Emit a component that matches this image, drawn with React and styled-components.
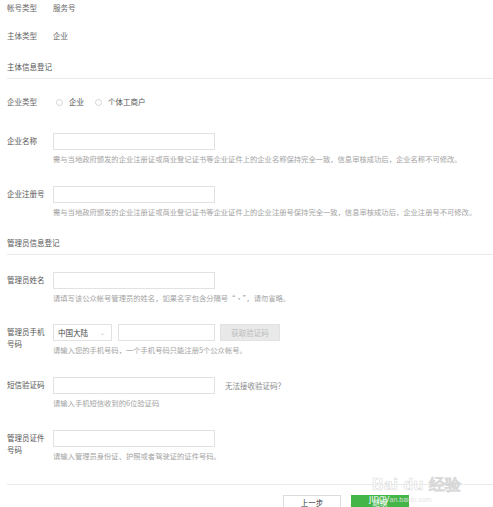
import React from "react";
import styled, { createGlobalStyle } from "styled-components";

const Global = createGlobalStyle`
  html, body { margin: 0; padding: 0; background: #fff; }
  body {
    font-family: "Noto Sans CJK SC", "Noto Sans", "Liberation Sans", sans-serif;
    font-size: 7.5px;
    color: #555;
    overflow: hidden;
  }
  * { box-sizing: border-box; }
`;

const Page = styled.div`
  position: relative;
  width: 493px;
  height: 507px;
  padding: 3px 0 0 7px;
  display: flex;
  flex-direction: column;
  overflow: hidden;
`;

const InfoRow = styled.div`
  display: flex;
  line-height: 10px;
  margin-top: ${(p) => p.$mt || 0}px;
  color: #666;
`;

const InfoLabel = styled.div`
  width: 46px;
  flex: none;
`;

const SectionTitle = styled.div`
  margin-top: ${(p) => p.$mt}px;
  line-height: 10px;
  padding-bottom: 6px;
  border-bottom: 1px solid #ebebeb;
  color: #555;
`;

const FormRow = styled.div`
  display: flex;
  align-items: flex-start;
  margin-top: ${(p) => p.$mt}px;
`;

const Label = styled.div`
  width: 46px;
  flex: none;
  padding-top: ${(p) => (p.$two ? 2 : 3)}px;
  line-height: ${(p) => (p.$two ? 12 : 10)}px;
  color: #555;
`;

const Field = styled.div`
  display: flex;
  flex-direction: column;
`;

const Controls = styled.div`
  display: flex;
  align-items: center;
  gap: ${(p) => p.$gap || 0}px;
`;

const Input = styled.div`
  width: ${(p) => p.$w || 162}px;
  height: 17px;
  border: 1px solid #e2e2e2;
  background: #fff;
`;

const Select = styled.div`
  width: 59px;
  height: 17px;
  border: 1px solid #e2e2e2;
  display: flex;
  align-items: center;
  justify-content: space-between;
  padding: 0 6px 0 4px;
  color: #444;
  line-height: 10px;
`;

const Caret = styled.span`
  color: #bbb;
  font-size: 6px;
`;

const CodeButton = styled.div`
  width: 60px;
  height: 17px;
  margin-left: -1px;
  background: #e9e9e9;
  border: 1px solid #e2e2e2;
  color: #bcbcbc;
  display: flex;
  align-items: center;
  justify-content: center;
`;

const Help = styled.div`
  margin-top: 4px;
  line-height: 10px;
  font-size: 7.3px;
  color: #a3a3a3;
  white-space: nowrap;
`;

const LinkText = styled.span`
  margin-left: 10px;
  color: #8a8a8a;
`;

const RadioGroup = styled.div`
  display: flex;
  align-items: center;
  gap: 4px;
  color: #555;
`;

const Radio = styled.span`
  width: 7px;
  height: 7px;
  border: 1px solid #d4d4d4;
  border-radius: 50%;
  margin-left: ${(p) => p.$ml || 0}px;
  margin-right: 2px;
`;

const Footer = styled.div`
  margin-top: 23px;
  border-top: 1px solid #ebebeb;
  padding-top: 10px;
  display: flex;
  padding-left: 276px;
  gap: 10px;
`;

const Button = styled.div`
  width: 58px;
  height: 16px;
  display: flex;
  align-items: center;
  justify-content: center;
  line-height: 10px;
  border: 1px solid ${(p) => (p.$primary ? "#44b549" : "#dcdcdc")};
  background: ${(p) => (p.$primary ? "#44b549" : "#fff")};
  color: ${(p) => (p.$primary ? "#fff" : "#333")};
`;

const Watermark = styled.div`
  position: absolute;
  left: 372px;
  top: 476px;
  pointer-events: none;
  display: flex;
  flex-direction: column;
  align-items: flex-start;
`;

const WmLogo = styled.div`
  font-family: "Liberation Sans", sans-serif;
  font-size: 16px;
  font-weight: bold;
  line-height: 17px;
  letter-spacing: 0.5px;
  color: rgba(255, 255, 255, 0.6);
  -webkit-text-stroke: 0.6px rgba(200, 200, 200, 0.7);
`;

const WmUrl = styled.div`
  font-family: "Liberation Sans", sans-serif;
  font-size: 7px;
  line-height: 10px;
  margin-top: 1px;
  margin-left: -3px;
  color: rgba(225, 225, 225, 0.9);
`;

const WmUrlStrong = styled.span`
  font-size: 10px;
  color: rgba(255, 255, 255, 0.9);
`;

export default function App() {
  return (
    <>
      <Global />
      <Page>
        <InfoRow>
          <InfoLabel>帐号类型</InfoLabel>
          <span>服务号</span>
        </InfoRow>
        <InfoRow $mt={18}>
          <InfoLabel>主体类型</InfoLabel>
          <span>企业</span>
        </InfoRow>

        <SectionTitle $mt={21}>主体信息登记</SectionTitle>

        <InfoRow $mt={18}>
          <InfoLabel>企业类型</InfoLabel>
          <RadioGroup>
            <Radio $ml={3} />
            <span>企业</span>
            <Radio $ml={7} />
            <span>个体工商户</span>
          </RadioGroup>
        </InfoRow>

        <FormRow $mt={26}>
          <Label>企业名称</Label>
          <Field>
            <Input />
            <Help>需与当地政府颁发的企业注册证或商业登记证书等企业证件上的企业名称保持完全一致，信息审核成功后，企业名称不可修改。</Help>
          </Field>
        </FormRow>

        <FormRow $mt={22}>
          <Label>企业注册号</Label>
          <Field>
            <Input />
            <Help>需与当地政府颁发的企业注册证或商业登记证书等企业证件上的企业注册号保持完全一致，信息审核成功后，企业注册号不可修改。</Help>
          </Field>
        </FormRow>

        <SectionTitle $mt={21}>管理员信息登记</SectionTitle>

        <FormRow $mt={17}>
          <Label>管理员姓名</Label>
          <Field>
            <Input />
            <Help>请填写该公众帐号管理员的姓名，如果名字包含分隔号“·”，请勿省略。</Help>
          </Field>
        </FormRow>

        <FormRow $mt={21}>
          <Label $two>管理员手机<br />号码</Label>
          <Field>
            <Controls $gap={6}>
              <Select>
                <span>中国大陆</span>
                <Caret>⌄</Caret>
              </Select>
              <Input $w={97} />
              <CodeButton>获取验证码</CodeButton>
            </Controls>
            <Help>请输入您的手机号码，一个手机号码只能注册5个公众帐号。</Help>
          </Field>
        </FormRow>

        <FormRow $mt={22}>
          <Label>短信验证码</Label>
          <Field>
            <Controls>
              <Input />
              <LinkText>无法接收验证码？</LinkText>
            </Controls>
            <Help>请输入手机短信收到的6位验证码</Help>
          </Field>
        </FormRow>

        <FormRow $mt={22}>
          <Label $two>管理员证件<br />号码</Label>
          <Field>
            <Input />
            <Help>请输入管理员身份证、护照或者驾驶证的证件号码。</Help>
          </Field>
        </FormRow>

        <Footer>
          <Button>上一步</Button>
          <Button $primary>继续</Button>
        </Footer>

        <Watermark>
          <WmLogo>Bai du 经验</WmLogo>
          <WmUrl><WmUrlStrong>jingy</WmUrlStrong>an.baidu.com</WmUrl>
        </Watermark>
      </Page>
    </>
  );
}
